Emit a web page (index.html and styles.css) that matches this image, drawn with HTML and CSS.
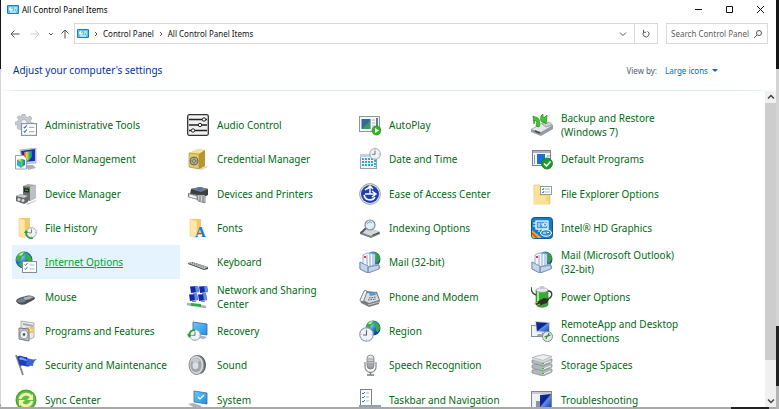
FILE: index.html
```html
<!DOCTYPE html>
<html lang="en">

<head>
    <meta charset="utf-8">
    <title>All Control Panel Items</title>
    <link rel="stylesheet" href="styles.css">
</head>

<body>
    <!-- shared drawings -->
    <svg class="defs" aria-hidden="true">
        <defs>
            <linearGradient id="gBlue" x1="0" y1="0" x2="1" y2="1">
                <stop offset="0" stop-color="#1233a8" />
                <stop offset=".45" stop-color="#0b1f8c" />
                <stop offset=".55" stop-color="#5f8fe8" />
                <stop offset="1" stop-color="#1b3fc0" />
            </linearGradient>
            <linearGradient id="gGold" x1="0" y1="0" x2="1" y2="1">
                <stop offset="0" stop-color="#ffe9a6" />
                <stop offset="1" stop-color="#f3cf6b" />
            </linearGradient>
            <linearGradient id="gGrey" x1="0" y1="0" x2="0" y2="1">
                <stop offset="0" stop-color="#f4f4f4" />
                <stop offset="1" stop-color="#8d9095" />
            </linearGradient>
            <radialGradient id="gSea" cx=".35" cy=".3" r=".8">
                <stop offset="0" stop-color="#8fd0ff" />
                <stop offset=".5" stop-color="#1f6fd8" />
                <stop offset="1" stop-color="#0a2c86" />
            </radialGradient>
            <linearGradient id="gRainbow" x1="0" y1="0" x2="1" y2="0">
                <stop offset="0" stop-color="#f03a3a" />
                <stop offset=".35" stop-color="#ffd92e" />
                <stop offset=".65" stop-color="#2ecb4a" />
                <stop offset="1" stop-color="#2a62ff" />
            </linearGradient>
            <linearGradient id="gSky" x1="0" y1="0" x2="1" y2="1">
                <stop offset="0" stop-color="#6fc8fb" />
                <stop offset="1" stop-color="#1d8fe8" />
            </linearGradient>
        </defs>
        <symbol id="panel" viewBox="0 0 12 9">
            <rect width="12" height="9" rx="1" fill="#1c7fc4" />
            <rect x="1" y="1" width="10" height="7" fill="#5cc3f2" />
            <circle cx="4" cy="4" r="2" fill="#e8f6ff" />
            <path d="M4 4V2a2 2 0 0 1 2 2z" fill="#f3b23a" />
            <path d="M7 3h3M7 5h1M9 5h1M3 7h6" stroke="#fff" />
        </symbol>
        <symbol id="globe" viewBox="0 0 16 16">
            <circle cx="8" cy="8" r="7.5" fill="url(#gSea)" />
            <path d="M2 4c2-3 5-4 7-3L8 4 6 5 5 8 3 9 1 8zM10 2c3 1 5 4 5 6l-2 4-2-1V8L9 6zM5 10l4 1-1 4c-3 0-4-2-5-3z" fill="#3fae38" />
            <path d="M3 4c1-2 3-3 5-3L6 4z" fill="#b8f09c" />
        </symbol>
        <symbol id="clock" viewBox="0 0 14 14">
            <circle cx="7" cy="7" r="6.3" fill="#eef3f8" stroke="#929ca8" />
            <path d="M7 3v4.400H3.800" fill="none" stroke="#566" />
            <path d="M7 1.500v1M7 11.500v1M1.500 7h1M11.500 7h1" stroke="#99a" stroke-width=".7" />
        </symbol>
        <symbol id="list" viewBox="0 0 15 12">
            <rect x=".5" y=".5" width="14" height="11" fill="#fff" stroke="#8c8c8c" />
            <path d="M2.500 3.500l1 1 2-2.500M2.500 7.500l1 1 2-2.500" fill="none" stroke="#1b74d0" />
            <path d="M7.500 4h5M7.500 8h5" stroke="#a9b4be" />
        </symbol>
        <symbol id="mail" viewBox="0 0 22 22">
            <circle cx="14" cy="8" r="7.500" fill="url(#gSea)" />
            <path d="M14 1c4 0 7 3 7 7l-3 5-2-4 1-4z" fill="#35a03c" />
            <path d="M1 11l5 3 13-1 2 4-12 5-8-4z" fill="#dfe9f5" stroke="#6f87ab" stroke-width=".8" />
            <path d="M4 4l4-2 8 1v11l-8 2-4-3z" fill="#f5f9ff" stroke="#7d9ac4" stroke-width=".8" />
            <path d="M8 4v11M11 3v12M14 3v11" stroke="#88a6d2" />
            <path d="M5 5h2v2H5z" fill="#e23838" />
            <path d="M1 11l8 4v7l-8-4zM9 16l11-2v4l-11 4z" fill="#c4d5ea" stroke="#6f87ab" stroke-width=".8" />
        </symbol>
        <symbol id="screen" viewBox="0 0 9 8">
            <path d="M0 .5l8-.5 1 6-8 1z" fill="#1129a4" />
            <path d="M5 .2l3-.2 1 6-3 .4z" fill="#5f8fe8" />
            <path d="M3 7h4v1H3z" fill="#8791a5" />
        </symbol>
    </svg>

    <div class="window">
        <header class="titlebar">
            <svg class="panel-icon"><use href="#panel" /></svg>
            <span class="title">All Control Panel Items</span>
            <div class="window-buttons">
                <button aria-label="Minimize"><svg viewBox="0 0 9 9"><path d="M1 4.500h7" /></svg></button>
                <button aria-label="Maximize"><svg viewBox="0 0 9 9"><path d="M1.500 1.500h6v6h-6z" /></svg></button>
                <button aria-label="Close"><svg viewBox="0 0 9 9"><path d="M1 1l7 7M8 1l-7 7" /></svg></button>
            </div>
        </header>

        <nav class="navbar">
            <div class="history">
                <button aria-label="Back"><svg viewBox="0 0 10 10"><path d="M9.500 5H1M4.500 1.500L1 5l3.500 3.500" /></svg></button>
                <button aria-label="Forward" disabled><svg viewBox="0 0 10 10"><path d="M.5 5H9M5.500 1.500L9 5 5.500 8.500" /></svg></button>
                <button aria-label="Recent locations" class="recent"><svg viewBox="0 0 10 10"><path d="M3 4l2 2 2-2" /></svg></button>
                <button aria-label="Up" class="up"><svg viewBox="0 0 10 10"><path d="M5 9.500V1M1.500 4.500L5 1l3.500 3.500" /></svg></button>
            </div>
            <div class="address">
                <svg class="panel-icon"><use href="#panel" /></svg>
                <svg class="sep" viewBox="0 0 4 6"><path d="M1 1l2 2-2 2" /></svg>
                <a href="#">Control Panel</a>
                <svg class="sep" viewBox="0 0 4 6"><path d="M1 1l2 2-2 2" /></svg>
                <a href="#">All Control Panel Items</a>
                <button class="drop" aria-label="Previous locations"><svg viewBox="0 0 10 10"><path d="M2 3.500l3 3 3-3" /></svg></button>
                <button class="refresh" aria-label="Refresh"><svg viewBox="0 0 10 10"><path d="M6.500 2.300A3 3 0 1 1 3 2.800M2.500 .8v2.500H5" /></svg></button>
            </div>
            <label class="search">
                <input type="text" aria-label="Search Control Panel" placeholder="Search Control Panel">
                <svg viewBox="0 0 10 10"><circle cx="6" cy="4" r="2.500" /><path d="M4 6L1 9" /></svg>
            </label>
        </nav>

        <div class="heading">
            <h1>Adjust your computer's settings</h1>
            <label for="view">View by:</label>
            <div class="view">
                <select id="view">
                    <option>Large icons</option>
                </select>
                <svg viewBox="0 0 6 3"><path d="M0 0h6L3 3z" /></svg>
            </div>
        </div>

        <div class="content">
            <main class="items">
                <a class="item" href="#">
                    <svg viewBox="0 0 22 22">
                        <path d="M7 0h3l.5 2.500 2 1L15 2l2 2-1.500 2.500.5 2 2.500.5v3l-2 1-3 3H7l-4-1-1-2 1-2.500L0 11V8l2.500-.5 1-2L2 3.500l2-2L6.500 3z" fill="#c3cad1" stroke="#a3abb3" stroke-width=".6" />
                        <circle cx="9" cy="8.500" r="3" fill="#eef1f4" stroke="#9aa3ac" stroke-width=".6" />
                        <use href="#list" x="6" y="9" width="16" height="13" />
                    </svg>
                    <span>Administrative Tools</span>
                </a>
                <a class="item" href="#">
                    <svg viewBox="0 0 22 22">
                        <rect x=".7" y=".7" width="20.600" height="20.600" rx="1.500" fill="#f1f1f1" stroke="#333" stroke-width="1.300" />
                        <path d="M2 5.500h18M2 11h18M2 16.500h18" stroke="#222" stroke-width="1.400" />
                        <g fill="#fff" stroke="#222"><circle cx="17" cy="5.500" r="1.700" /><circle cx="13" cy="11" r="1.700" /><circle cx="6" cy="16.500" r="1.700" /></g>
                    </svg>
                    <span>Audio Control</span>
                </a>
                <a class="item" href="#">
                    <svg viewBox="0 0 22 22">
                        <rect x=".5" y="2.500" width="20" height="15" fill="#f5f7f9" stroke="#8d969f" />
                        <rect x="2.500" y="5" width="9" height="10" fill="#326a9c" />
                        <path d="M3 15l8-8v8z" fill="#3f9a5d" />
                        <path d="M13 6h3M13 9h3M13 12h3" stroke="#aab3bc" />
                        <path d="M18 4v10" stroke="#31516f" stroke-width="1.500" />
                        <circle cx="17.500" cy="16.500" r="4.500" fill="#39b228" stroke="#268a1c" stroke-width=".7" />
                        <path d="M16 14l4 2.500-4 2.500z" fill="#fff" />
                    </svg>
                    <span>AutoPlay</span>
                </a>
                <a class="item" href="#">
                    <svg viewBox="0 0 22 22">
                        <path d="M0 16l12-7 10 3v3l-12 7-10-4z" fill="#969ba0" />
                        <path d="M0 15.500l12-7 10 3-12 7z" fill="#e3e5e8" stroke="#84898e" stroke-width=".6" />
                        <path d="M14 8c4 0 7 1 7 3l-6 2-4-3z" fill="#c8ccd0" stroke="#81868b" stroke-width=".6" />
                        <path d="M3 10l-1-8 2 1c4 0 6 5 4 10l-3-1c1-3 1-5-1-6z" fill="#43c832" stroke="#208418" stroke-width=".7" />
                        <path d="M16 1l-1 9-2-2c-3 1-4-2-3-6l2-2c0 3 0 4 2 3z" fill="#43c832" stroke="#208418" stroke-width=".7" />
                        <path d="M4 17l5 2" stroke="#44484c" stroke-width="1.500" />
                    </svg>
                    <span>Backup and Restore (Windows 7)</span>
                </a>

                <a class="item" href="#">
                    <svg viewBox="0 0 22 22">
                        <path d="M5 2l16-2v15l-13 1z" fill="#cdd5e2" stroke="#8993a6" stroke-width=".6" />
                        <path d="M6 3l14-2v12L8 14z" fill="#1732ae" />
                        <path d="M9 4l8-1v6l-4 4-4-3z" fill="url(#gRainbow)" />
                        <path d="M11 17h7l3 3-8 2z" fill="#aab1be" />
                        <path d="M.5 7.500h8l3 3V21H.5z" fill="#fff" stroke="#98a1ae" />
                        <path d="M2 12l4-1.500 4 1.500v5l-4 3-4-3z" fill="url(#gRainbow)" />
                        <path d="M6 14v6l-4-3v-5z" fill="#1bb6df" />
                    </svg>
                    <span>Color Management</span>
                </a>
                <a class="item" href="#">
                    <svg viewBox="0 0 22 22">
                        <path d="M12 21l8-3 1 1-7 3z" fill="#d5d1c4" />
                        <path d="M2 5l9-4 7 1v16l-6 3-10-2z" fill="#d8bd55" />
                        <path d="M2 5l10 1 6-4-7-1z" fill="#f3e39a" />
                        <path d="M12 6l6-4v16l-6 3z" fill="#b8962f" />
                        <path d="M2 5l10 1v15L2 19z" fill="#e1c968" stroke="#a98e35" stroke-width=".6" />
                        <circle cx="7" cy="13" r="4" fill="#b3b1a6" stroke="#6e6849" />
                        <circle cx="7" cy="13" r="1.700" fill="#eee" stroke="#6e6849" stroke-width=".7" />
                        <path d="M7 9v8M3 13h8" stroke="#6e6849" stroke-width=".6" />
                    </svg>
                    <span>Credential Manager</span>
                </a>
                <a class="item" href="#">
                    <svg viewBox="0 0 22 22">
                        <rect x="1.500" y="6.500" width="16" height="14" fill="#eef7fa" stroke="#93a3af" />
                        <path d="M1 6h17v3H1z" fill="#c4d1da" />
                        <path d="M4 10v9M7 10v9M10 10v9M13 10v9M16 12v7" stroke="#2dacca" stroke-width="2" stroke-dasharray="2 1" />
                        <use href="#clock" x="10" y="0" width="12" height="12" />
                    </svg>
                    <span>Date and Time</span>
                </a>
                <a class="item" href="#">
                    <svg viewBox="0 0 22 22">
                        <rect x="1.500" y="2.500" width="18" height="15" fill="#f5f7f9" stroke="#78828b" />
                        <path d="M2 3h17v2H2z" fill="#aab3bb" />
                        <rect x="6" y="6" width="8" height="10" fill="#1473d2" />
                        <path d="M3.500 7v9M16 8h3M16 11h3" stroke="#8d9aa6" />
                        <circle cx="16" cy="15.500" r="5.500" fill="#1c9a2c" stroke="#137020" stroke-width=".7" />
                        <path d="M13 15.500l2.500 2.500 4-4.500" fill="none" stroke="#fff" stroke-width="1.600" />
                    </svg>
                    <span>Default Programs</span>
                </a>

                <a class="item" href="#">
                    <svg viewBox="0 0 22 22">
                        <path d="M8 3l5-2 8 1v13l-6 3-7-3z" fill="#a7a7a7" />
                        <path d="M8 3l7 1v14l-7-2z" fill="#6a6c6e" />
                        <path d="M15 4l6-2v13l-6 3z" fill="#bebfc0" />
                        <path d="M9 5l5 .5v4L9 9z" fill="#1f2a22" />
                        <path d="M10 7l3 .5" stroke="#34c441" />
                        <path d="M1 13l5-2 7 2v6l-4 2-8-3z" fill="#66686b" />
                        <path d="M1 13l8 2 4-2-7-2z" fill="#c8c9ca" />
                        <circle cx="4" cy="16.500" r="1.500" fill="#ddd" /><circle cx="8" cy="17.500" r="1.500" fill="#ddd" />
                        <path d="M11 21l10-4v1l-9 4z" fill="#c8c8c8" />
                    </svg>
                    <span>Device Manager</span>
                </a>
                <a class="item" href="#">
                    <svg viewBox="0 0 22 22">
                        <path d="M4 6l9-2 8 2v6l-6 3-12-4z" fill="#3b3f44" />
                        <path d="M4 6l9-2 8 2-7 3z" fill="#777d84" />
                        <path d="M9 6l4-1 3 1-3 1z" fill="#3272c6" />
                        <path d="M1 10l10 2v5L1 14z" fill="#84898e" />
                        <path d="M2 11l8 2v3l-8-2z" fill="#f5f5f5" stroke="#777" stroke-width=".5" />
                        <path d="M10 12h8v8l-7-2z" fill="#d4d7da" stroke="#5f646a" stroke-width=".7" />
                        <path d="M13 13v5M16 13v6" stroke="#65696e" />
                    </svg>
                    <span>Devices and Printers</span>
                </a>
                <a class="item" href="#">
                    <svg viewBox="0 0 22 22">
                        <circle cx="11" cy="11" r="10.400" fill="#e4e8ef" stroke="#878c98" stroke-width=".8" />
                        <circle cx="11" cy="11" r="9" fill="#1e3fae" />
                        <path d="M5 12a6 6 0 0 0 11 2M6 7a6 6 0 0 1 4-2" fill="none" stroke="#fff" stroke-width="1.600" />
                        <path d="M11 4v7M6 11h10M13 8l4 3-4 3M8 6l3-3 3 3" fill="none" stroke="#fff" stroke-width="1.400" />
                    </svg>
                    <span>Ease of Access Center</span>
                </a>
                <a class="item" href="#">
                    <svg viewBox="0 0 22 22">
                        <path d="M3 2h6l1 2h9v17H3z" fill="url(#gGold)" stroke="#e0bd62" stroke-width=".6" />
                        <rect x="9.500" y="3.500" width="11" height="8" fill="#fff" stroke="#919aa3" />
                        <path d="M11 6l1 1 1-2M11 9l1 1 1-2" fill="none" stroke="#1b74d0" stroke-width=".9" />
                        <path d="M14 6h5M14 9h5" stroke="#a9b4be" />
                        <path d="M3 13h12v5h3v3H3z" fill="#fbe294" />
                    </svg>
                    <span>File Explorer Options</span>
                </a>

                <a class="item" href="#">
                    <svg viewBox="0 0 22 22">
                        <path d="M4 1h11v18H4z" fill="#efca68" />
                        <path d="M4 1l6 2v18l-6-2z" fill="#ffe8a3" stroke="#e9c974" stroke-width=".5" />
                        <use href="#clock" x="11" y="10" width="11" height="11" />
                        <path d="M11 16c0 4 4 6 7 5" fill="none" stroke="#2f9b42" stroke-width="1.700" />
                        <path d="M9 16l2-3 3 3z" fill="#2f9b42" />
                    </svg>
                    <span>File History</span>
                </a>
                <a class="item" href="#">
                    <svg viewBox="0 0 22 22">
                        <path d="M3 2h11v16H3z" fill="#f1cb68" />
                        <path d="M3 2l7 2v17l-7-2z" fill="#ffe8a3" stroke="#e9c974" stroke-width=".5" />
                        <text class="font-glyph" x="8" y="20">A</text>
                    </svg>
                    <span>Fonts</span>
                </a>
                <a class="item" href="#">
                    <svg viewBox="0 0 22 22">
                        <path d="M1 15l9-4 11 4v2l-9 4-11-4z" fill="#777c80" />
                        <path d="M1 15l9-4 11 4-9 4z" fill="#d4d7d9" />
                        <path d="M13 18.500l7-3" stroke="#3b3e40" />
                        <circle cx="13" cy="19" r="1" fill="#39d039" />
                        <path d="M7 11l-5 5" stroke="#54595e" stroke-width="2" />
                        <circle cx="11" cy="8" r="5" fill="#dceefa" stroke="#858d95" stroke-width="1.200" />
                        <path d="M8 7c1-2 4-3 5-1" fill="none" stroke="#5b9fda" />
                    </svg>
                    <span>Indexing Options</span>
                </a>
                <a class="item" href="#">
                    <svg viewBox="0 0 22 22">
                        <rect x=".5" y=".5" width="21" height="21" rx="3" fill="#187bc8" stroke="#0e5595" />
                        <path d="M1 13v6q0 2 2 2h8z" fill="#f1a62c" />
                        <path d="M1 16l5 5" stroke="#d44b2c" stroke-width="1.500" />
                        <rect x="5" y="4" width="12" height="8" fill="#3f9fe0" stroke="#fff" stroke-width="1.200" />
                        <path d="M2 6h3M2 9h3M8 12v3M12 12v2M8 6v4M10 7h2v3" fill="none" stroke="#fff" />
                        <circle cx="14" cy="7.500" r="1.700" fill="none" stroke="#fff" />
                        <ellipse cx="15" cy="16" rx="5.500" ry="3.300" fill="#2f93da" stroke="#fff" />
                        <path d="M12 16h1M14 15v2M16 15.500h2" stroke="#fff" />
                    </svg>
                    <span>Intel® HD Graphics</span>
                </a>

                <a class="item selected" href="#">
                    <svg viewBox="0 0 22 22">
                        <use href="#globe" x="0" y="0" width="18" height="18" />
                        <use href="#list" x="7" y="10" width="15" height="12" />
                    </svg>
                    <span>Internet Options</span>
                </a>
                <a class="item" href="#">
                    <svg viewBox="0 0 22 22">
                        <path d="M1 12l4-1 16 5v2l-4 1L1 13z" fill="#4a4d50" />
                        <path d="M1 12l4-1 16 5-4 2z" fill="#c8cacc" />
                        <path d="M3 12l14 4.500M5 11.500l14 4.500" stroke="#6c7074" stroke-dasharray="1 1" />
                    </svg>
                    <span>Keyboard</span>
                </a>
                <a class="item" href="#">
                    <svg viewBox="0 0 22 22"><use href="#mail" /></svg>
                    <span>Mail (32-bit)</span>
                </a>
                <a class="item" href="#">
                    <svg viewBox="0 0 22 22"><use href="#mail" /></svg>
                    <span>Mail (Microsoft Outlook) (32-bit)</span>
                </a>

                <a class="item" href="#">
                    <svg viewBox="0 0 22 22">
                        <path d="M1 15c1-3 6-4 10-5 4-1 8 0 9 2 0 2-6 4-9 6-4 2-9 0-10-3z" fill="#4b5057" />
                        <path d="M8 12c4-2 8-2 11-1-3 2-6 3-9 3z" fill="#a9b3bf" />
                        <path d="M2 15c1-2 4-3 6-3l3 3c-3 2-8 2-9 0z" fill="#75808c" />
                    </svg>
                    <span>Mouse</span>
                </a>
                <a class="item" href="#">
                    <svg viewBox="0 0 22 22">
                        <use href="#screen" x="3" y="0" width="9" height="8" />
                        <use href="#screen" x="12" y="0" width="9" height="8" />
                        <use href="#screen" x="2" y="8" width="9" height="8" />
                        <use href="#screen" x="11" y="8" width="9" height="8" />
                        <path d="M0 18l6 1M12 20l7 1" stroke="#a8b0b8" stroke-width="2.500" />
                        <path d="M4 17l10 1v3L4 20z" fill="#37a849" />
                    </svg>
                    <span>Network and Sharing Center</span>
                </a>
                <a class="item" href="#">
                    <svg viewBox="0 0 22 22">
                        <path d="M1 14l5-9 12 1 3 8-1 4-10 3-8-4z" fill="#767b80" />
                        <path d="M6 7l11 0 3 7-10 3-6-3z" fill="#d9dde0" />
                        <path d="M10 7l6-1 1 3-6 1z" fill="#4c9edc" />
                        <path d="M1 14l4-9c1-1 3-1 3 1l-3 8c0 2-4 2-4 0z" fill="#eef0f2" stroke="#61666b" stroke-width=".8" />
                        <path d="M10 12l7-1M9 14l8-1" stroke="#555a60" stroke-dasharray="1.500 1" />
                        <path d="M9 19l11-3" stroke="#c9ccd0" />
                    </svg>
                    <span>Phone and Modem</span>
                </a>
                <a class="item" href="#">
                    <svg viewBox="0 0 22 22">
                        <path d="M5 4h12v15c-2 3-10 3-12 0z" fill="#3aa93c" stroke="#207625" stroke-width=".6" />
                        <path d="M7 5v14" stroke="#a3eb91" stroke-width="2" />
                        <ellipse cx="11" cy="4" rx="6" ry="2.300" fill="#e4e7e5" stroke="#90989a" stroke-width=".6" />
                        <path d="M9 0h4v3H9z" fill="#c6cbca" />
                        <path d="M0 1c0 4 2 7 5 8M17 5c5 0 5 6 0 8" fill="none" stroke="#3b3f3a" stroke-width="1.400" />
                        <path d="M4 17l9-5 5 1-2 4-9 3z" fill="#332f24" />
                        <path d="M3 18l4-2M5 20l4-2" stroke="#d8bf69" />
                    </svg>
                    <span>Power Options</span>
                </a>

                <a class="item" href="#">
                    <svg viewBox="0 0 22 22">
                        <path d="M6 1l13 2v14l-3 2L6 17z" fill="#e8eaec" stroke="#8f959a" stroke-width=".7" />
                        <path d="M8 3l10 2v2L8 5z" fill="#a2a9af" />
                        <path d="M11 7h7v6h-7z" fill="#f3c440" />
                        <path d="M14 6l1 3 3 1-3 1-1 3-1-3-3-1 3-1z" fill="#fff3a4" />
                        <path d="M4 8l10 1v12L4 19z" fill="#c6cacd" stroke="#5d6266" stroke-width=".8" />
                        <ellipse cx="9" cy="14.500" rx="4" ry="4.500" fill="#eef0f1" stroke="#63686c" stroke-width=".7" />
                        <circle cx="9" cy="14.500" r="1.300" fill="#444" />
                    </svg>
                    <span>Programs and Features</span>
                </a>
                <a class="item" href="#">
                    <svg viewBox="0 0 22 22">
                        <path d="M6 2l14 2v11L6 13z" fill="url(#gSky)" stroke="#44677f" stroke-width=".8" />
                        <path d="M12 15l8 2-3 2-6-1z" fill="#aab3bb" />
                        <use href="#clock" x="2" y="9" width="12" height="12" />
                        <path d="M2 16c0-4 3-6 6-6" fill="none" stroke="#2d9c3e" stroke-width="2" />
                        <path d="M0 14l2 4 3-3z" fill="#2d9c3e" />
                    </svg>
                    <span>Recovery</span>
                </a>
                <a class="item" href="#">
                    <svg viewBox="0 0 22 22">
                        <use href="#globe" x="6" y="0" width="16" height="16" />
                        <use href="#clock" x="0" y="7" width="15" height="15" />
                    </svg>
                    <span>Region</span>
                </a>
                <a class="item" href="#">
                    <svg viewBox="0 0 22 22">
                        <rect x=".5" y="5.500" width="11" height="11" fill="#f1f3f5" stroke="#868e96" />
                        <path d="M4 1l15 1v12l-14-2z" fill="#cfd6df" />
                        <path d="M5 2l13 1v9L6 11z" fill="url(#gBlue)" />
                        <path d="M7 14h7v2H6z" fill="#9ca5b1" />
                        <circle cx="16.500" cy="16.500" r="5" fill="#e6e8e8" stroke="#868c8c" />
                        <path d="M13.500 17l2.500-1-1 3M19.500 15l-2.500 1 1-3" fill="none" stroke="#279438" stroke-width="1.200" />
                    </svg>
                    <span>RemoteApp and Desktop Connections</span>
                </a>

                <a class="item" href="#">
                    <svg viewBox="0 0 22 22">
                        <path d="M1 1l7 20" stroke="#7d858f" stroke-width="1.800" />
                        <path d="M2 3c4-3 6 1 10 0l3 9c-4 2-6-2-10 0z" fill="#1f3fb9" />
                        <path d="M12 4c3 1 6 2 10 1-3 2-4 4-4 7-3 0-5-1-7-1z" fill="#3a63d8" />
                        <path d="M4 4c3-2 4 1 7 1l1 2c-3 0-4-2-7-1z" fill="#7f9ff0" />
                    </svg>
                    <span>Security and Maintenance</span>
                </a>
                <a class="item" href="#">
                    <svg viewBox="0 0 22 22">
                        <path d="M10 1c5 0 8 3 9 9 0 5-2 9-6 10z" fill="#5d6165" />
                        <ellipse cx="9.500" cy="11" rx="7.500" ry="9.500" fill="#d4d7da" stroke="#82878b" />
                        <ellipse cx="9" cy="11" rx="5.500" ry="7.300" fill="#a0a4a8" />
                        <ellipse cx="8.500" cy="11.500" rx="3" ry="3.800" fill="#dbdfe3" />
                        <path d="M4 7c2-4 7-4 9 0L9 9z" fill="#c6cacd" />
                    </svg>
                    <span>Sound</span>
                </a>
                <a class="item" href="#">
                    <svg viewBox="0 0 22 22">
                        <path d="M6 8v5a5.500 5.500 0 0 0 11 0V8" fill="none" stroke="#8b9095" stroke-width="1.300" />
                        <path d="M11.500 18v3M8 21h7" stroke="#777c81" stroke-width="1.500" />
                        <rect x="8" y="1" width="7" height="14" rx="3.500" fill="url(#gGrey)" stroke="#777c81" stroke-width=".8" />
                        <path d="M8 5h7M8 7.500h7M8 10h7" stroke="#8f9499" stroke-width=".8" />
                    </svg>
                    <span>Speech Recognition</span>
                </a>
                <a class="item" href="#">
                    <svg viewBox="0 0 22 22">
                        <g fill="#b4b7b9" stroke="#7b7f82" stroke-width=".6">
                            <path d="M1 16l11-2 9 1v3l-9 4-11-3z" /><path d="M1 11l11-2 9 1v3l-9 4-11-3z" /><path d="M1 6l11-2 9 1v3l-9 4-11-3z" />
                        </g>
                        <path d="M1 3.500l11-3 9 2-9 4z" fill="#eceeef" stroke="#888c8f" stroke-width=".6" />
                        <path d="M12 6.500l9-4v2l-9 4-11-3v-2z" fill="#d5d7d9" />
                        <path d="M12 10l8-3M12 15l8-3M12 20l8-3" stroke="#f1f2f2" />
                        <path d="M11 9h2v1h-2zM11 14h2v1h-2zM11 19h2v1h-2z" fill="#38bb2e" />
                    </svg>
                    <span>Storage Spaces</span>
                </a>

                <a class="item" href="#">
                    <svg viewBox="0 0 22 22">
                        <circle cx="11" cy="11" r="10.500" fill="#47aa35" />
                        <circle cx="11" cy="11" r="9" fill="#5fc04a" />
                        <path d="M5 10a6.300 6.300 0 0 1 11-2.500M17 12a6.300 6.300 0 0 1-11 2.500" fill="none" stroke="#fff0a8" stroke-width="2.800" />
                        <path d="M18 5v6h-6zM4 17v-6h6z" fill="#fff0a8" />
                    </svg>
                    <span>Sync Center</span>
                </a>
                <a class="item" href="#">
                    <svg viewBox="0 0 22 22">
                        <path d="M7 2l13 2v11L7 13z" fill="url(#gSky)" stroke="#44677f" stroke-width=".8" />
                        <path d="M11 8l2 2 4-4" fill="none" stroke="#fff" stroke-width="1.200" />
                        <path d="M1 15l5-1 9 3-5 3z" fill="#aab3bb" />
                    </svg>
                    <span>System</span>
                </a>
                <a class="item" href="#">
                    <svg viewBox="0 0 22 22">
                        <rect x="1.500" y=".5" width="11" height="16" fill="#fff" stroke="#7c848b" />
                        <path d="M3 4l1 1 2-2M3 8l1 1 2-2M3 12l1 1 2-2" fill="none" stroke="#1b74d0" />
                        <path d="M7 4h3M7 8h3M7 12h3" stroke="#a9b4be" />
                        <path d="M0 16h22v4H0z" fill="#8ba2b7" />
                    </svg>
                    <span>Taskbar and Navigation</span>
                </a>
                <a class="item" href="#">
                    <svg viewBox="0 0 22 22">
                        <rect x=".5" y="2.500" width="20" height="17" fill="#eff1f3" stroke="#80878d" />
                        <path d="M1 3h19v2H1z" fill="#c6ccd2" />
                        <path d="M9 6l11-1v13H9z" fill="url(#gBlue)" />
                        <path d="M5 12h4v6H5z" fill="#8a94a2" />
                    </svg>
                    <span>Troubleshooting</span>
                </a>
            </main>
            <div class="scrollbar">
                <button aria-label="Scroll up"><svg viewBox="0 0 8 8"><path d="M1 5.500l3-3 3 3" /></svg></button>
                <div class="track"><div class="thumb"></div></div>
                <button aria-label="Scroll down"><svg viewBox="0 0 8 8"><path d="M1 2.500l3 3 3-3" /></svg></button>
            </div>
        </div>
    </div>
</body>

</html>
```

FILE: styles.css
```css
* {
    box-sizing: border-box;
}

body {
    font-family: "Noto Sans", sans-serif;
    font-size: 10px;
    margin: 0;
    padding: 0 3px 2px 1px;
    display: flex;
    height: 100vh;
    overflow: hidden;
    background:
        linear-gradient(#161616 69px, #d4d4d4 69px, #d4d4d4 326px, #222 326px, #222 386px, #b4b4b4 386px) right / 3px 100% no-repeat,
        linear-gradient(#222, #222) right 10px bottom / 38px 2px no-repeat,
        linear-gradient(#161616 69px, #d4d4d4 69px, #d4d4d4 404px, #a8a8a8 404px);
}

.defs {
    position: absolute;
    width: 0;
    height: 0;
}

.window {
    flex: 1;
    display: flex;
    flex-direction: column;
    min-width: 0;
    background: #fff;
}

button {
    border: none;
    padding: 0;
    background: none;
    display: flex;
    align-items: center;
    justify-content: center;
}

svg {
    flex: none;
}

.panel-icon {
    width: 12px;
    height: 9px;
}

/* title bar */
.titlebar {
    display: flex;
    align-items: center;
    gap: 3px;
    height: 18px;
    padding-left: 6px;
}

.title {
    font-size: 8px;
    color: #000;
}

.window-buttons {
    display: flex;
    margin-left: auto;
}

.window-buttons button {
    width: 31px;
    height: 18px;
}

.window-buttons svg {
    width: 9px;
    height: 9px;
    fill: none;
    stroke: #111;
}

/* navigation row */
.navbar {
    display: flex;
    align-items: center;
    height: 31px;
    padding: 0 8px 0 4px;
}

.history {
    display: flex;
    margin-right: 1px;
}

.history button {
    width: 20px;
}

.history .recent {
    width: 12px;
}

.history .up {
    width: 16px;
}

.navbar button svg,
.search svg {
    width: 10px;
    height: 10px;
    fill: none;
    stroke: #555;
}

.history button:disabled svg {
    stroke: #ccc;
}

.address {
    flex: 1;
    display: flex;
    align-items: center;
    height: 21px;
    padding-left: 2px;
    border: 1px solid #d9d9d9;
}

.address a {
    color: #111;
    font-size: 8px;
    text-decoration: none;
}

.address .sep {
    width: 4px;
    height: 6px;
    margin: 0 5px;
    fill: none;
    stroke: #555;
}

.address button {
    width: 23px;
    height: 19px;
}

.address .drop {
    margin-left: auto;
}

.address .refresh {
    border-left: 1px solid #d9d9d9;
}

.search {
    display: flex;
    align-items: center;
    width: 102px;
    height: 21px;
    margin-left: 8px;
    padding: 0 4px;
    border: 1px solid #d9d9d9;
}

.search input {
    flex: 1;
    min-width: 0;
    border: none;
    padding: 0;
    font: 8px "Noto Sans", sans-serif;
}

.search input::placeholder {
    color: #5d5d5d;
}

/* heading */
.heading {
    display: flex;
    align-items: center;
    height: 42px;
    padding: 0 58px 0 12px;
    background: linear-gradient(to right, #fff, #dbe9f5 16px, #dbe9f5 96%, #fff) bottom / 100% 1px no-repeat;
}

.heading h1 {
    margin: 0;
    font-size: 10px;
    font-weight: normal;
    color: #039;
}

.heading label {
    margin-left: auto;
    font-size: 8px;
    color: #4c5c70;
}

.view {
    display: flex;
    align-items: center;
    gap: 4px;
    margin-left: 8px;
}

.view select {
    appearance: none;
    border: none;
    padding: 0;
    background: none;
    color: #06c;
    font: 8px "Noto Sans", sans-serif;
}

.view svg {
    width: 6px;
    height: 3px;
    fill: #06c;
}

/* items */
.content {
    flex: 1;
    display: flex;
    min-height: 0;
}

.items {
    flex: 1;
    display: grid;
    grid-template-columns: repeat(auto-fill, 168px);
    grid-template-rows: repeat(3, 34px 34px 35px);
    column-gap: 4px;
    padding: 17px 0 0 11px;
    overflow: hidden;
}

.item {
    display: flex;
    align-items: center;
    gap: 8px;
    padding: 0 30px 0 3px;
    line-height: 14px;
    color: #006b12;
    text-decoration: none;
}

.item svg {
    width: 22px;
    height: 22px;
}

.item span {
    flex: none;
    max-width: 130px;
}

.item.selected {
    background: #e5f3ff;
    color: #00a328;
    text-decoration: underline;
}

.font-glyph {
    font: bold 15px "Liberation Serif", serif;
    fill: #1b77d3;
}

/* scroll bar */
.scrollbar {
    display: flex;
    flex-direction: column;
    width: 11px;
    background: #f0f0f0;
}

.scrollbar button {
    height: 12px;
}

.scrollbar svg {
    width: 8px;
    height: 8px;
    fill: none;
    stroke: #444;
    stroke-width: 1.5px;
}

.track {
    flex: 1;
}

.thumb {
    height: 88%;
    background: #cdcdcd;
}
```
